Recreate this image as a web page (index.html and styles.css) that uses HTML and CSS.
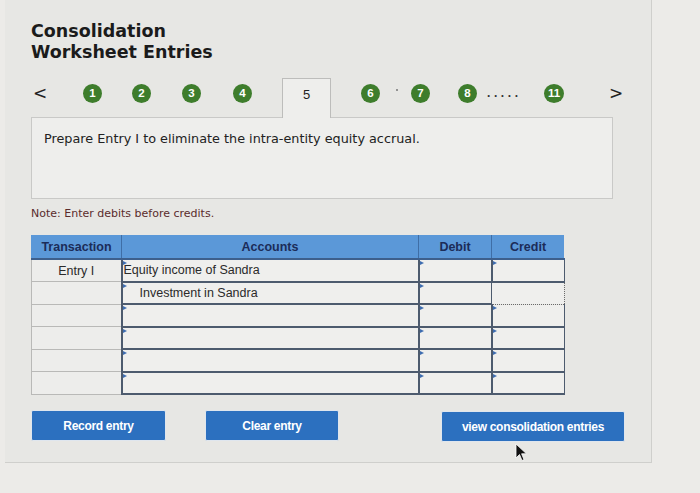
FILE: index.html
```html
<!DOCTYPE html>
<html>
<head>
<meta charset="utf-8">
<link rel="stylesheet" href="styles.css">
</head>
<body>
<div class="panel">
  <h1 class="title">Consolidation<br>Worksheet Entries</h1>
  <div class="nav">
    <span class="arrow prev">&lt;</span>
    <span class="dot n1">1</span>
    <span class="dot n2">2</span>
    <span class="dot n3">3</span>
    <span class="dot n4">4</span>
    <span class="tab">5</span>
    <span class="dot n6">6</span>
    <span class="speck"></span>
    <span class="dot n7">7</span>
    <span class="dot n8">8</span>
    <span class="ellipsis">.....</span>
    <span class="dot n11">11</span>
    <span class="arrow next">&gt;</span>
  </div>
  <div class="prompt">Prepare Entry I to eliminate the intra-entity equity accrual.</div>
  <div class="note">Note: Enter debits before credits.</div>
  <table class="entries">
    <thead>
      <tr>
        <th class="c-tr">Transaction</th>
        <th class="c-acc">Accounts</th>
        <th class="c-num">Debit</th>
        <th class="c-num">Credit</th>
      </tr>
    </thead>
    <tbody>
      <tr>
        <td class="tr">Entry I</td>
        <td class="in acc">Equity income of Sandra</td>
        <td class="in"></td>
        <td class="in"></td>
      </tr>
      <tr>
        <td class="tr"></td>
        <td class="in acc indent">Investment in Sandra</td>
        <td class="in"></td>
        <td class="in focus"></td>
      </tr>
      <tr><td class="tr"></td><td class="in"></td><td class="in"></td><td class="in"></td></tr>
      <tr><td class="tr"></td><td class="in"></td><td class="in"></td><td class="in"></td></tr>
      <tr><td class="tr"></td><td class="in"></td><td class="in"></td><td class="in"></td></tr>
      <tr><td class="tr"></td><td class="in"></td><td class="in"></td><td class="in"></td></tr>
    </tbody>
  </table>
  <div class="buttons">
    <button class="btn b-record">Record entry</button>
    <button class="btn b-clear">Clear entry</button>
    <button class="btn b-view">view consolidation entries</button>
  </div>
  <svg class="cursor" width="13" height="19" viewBox="0 0 13 19">
    <path d="M1 1 L1 15 L4.5 11.5 L7 17.5 L9 16.6 L6.6 10.8 L11.5 10.8 Z" fill="#111" stroke="#fff" stroke-width="0.8"/>
  </svg>
</div>
</body>
</html>
```
FILE: styles.css
```css
html, body {
  margin: 0;
  padding: 0;
}
body {
  width: 700px;
  height: 493px;
  background: #ecebe8;
  font-family: "Liberation Sans", Arial, sans-serif;
  overflow: hidden;
}
.panel {
  position: relative;
  margin-left: 5px;
  width: 647px;
  height: 463px;
  background: #e7e7e4;
  border-right: 1px solid #cfcfcc;
  border-bottom: 1px solid #cfcfcc;
  padding-left: 26px;
  box-sizing: border-box;
  padding-top: 21px;
}
.title {
  margin: 0;
  font-family: "DejaVu Sans", Verdana, sans-serif;
  font-weight: bold;
  font-size: 17.5px;
  line-height: 21px;
  color: #1b1b1b;
}
.nav {
  display: flex;
  align-items: flex-start;
  margin-top: 15px;
  height: 39px;
}
.arrow {
  width: 18px;
  text-align: center;
  font-family: "DejaVu Sans", sans-serif;
  font-size: 17px;
  line-height: 18px;
  margin-top: 6px;
  color: #222;
}
.dot {
  width: 19px;
  height: 19px;
  border-radius: 50%;
  background: #3e7d2c;
  color: #fff;
  font-weight: bold;
  font-size: 11.5px;
  line-height: 19px;
  text-align: center;
  margin-top: 6px;
}
.n1 { margin-left: 34px; }
.n2 { margin-left: 30px; }
.n3 { margin-left: 31px; }
.n4 { margin-left: 32px; }
.tab {
  margin-left: 30px;
  width: 49px;
  height: 40px;
  box-sizing: border-box;
  border: 1px solid #bdbdbb;
  border-bottom: none;
  background: #eeeeec;
  text-align: center;
  font-size: 13px;
  line-height: 18px;
  padding-top: 7px;
  color: #222;
  position: relative;
  z-index: 2;
}
.n6 { margin-left: 30px; }
.speck {
  width: 2px;
  height: 2px;
  border-radius: 50%;
  background: #777;
  margin-left: 16px;
  margin-top: 11px;
}
.n7 { margin-left: 13px; }
.n8 { margin-left: 28px; }
.ellipsis {
  margin-left: 10px;
  width: 34px;
  font-weight: bold;
  font-size: 12px;
  letter-spacing: 3.6px;
  line-height: 18px;
  margin-top: 6px;
  color: #333;
  white-space: nowrap;
  overflow: hidden;
}
.n11 {
  margin-left: 23px;
  width: 20px;
}
.next { margin-left: 43px; }
.prompt {
  width: 582px;
  height: 82px;
  box-sizing: border-box;
  border: 1px solid #c9c9c7;
  background: #eeeeec;
  padding: 12px 0 0 12px;
  font-family: "DejaVu Sans", Verdana, sans-serif;
  font-size: 12.8px;
  line-height: 18px;
  color: #222;
  position: relative;
  z-index: 1;
}
.note {
  margin-top: 8px;
  font-family: "DejaVu Sans", Verdana, sans-serif;
  font-size: 11px;
  line-height: 14px;
  color: #5a2c2c;
}
.entries {
  margin-top: 14px;
  width: 531px;
  border-collapse: collapse;
  table-layout: fixed;
}
.entries th {
  height: 23px;
  padding: 0;
  background: #5b98d8;
  color: #1c2c58;
  font-size: 12.5px;
  font-weight: bold;
  border-left: 1px solid #3f6ea6;
  border-bottom: 2px solid #3d5f8c;
}
.entries th:first-child { border-left: 1px solid #5b98d8; }
.c-tr { width: 89px; }
.c-acc { width: 296px; }
.c-num { width: 72px; }
.entries td {
  height: 20.5px;
  padding: 0;
  font-size: 12.5px;
  color: #2a2a2a;
}
.tr {
  text-align: center;
  background: #ededeb;
  border: 1px solid #b9b9b7;
}
.in {
  position: relative;
  background: #efefed;
  border-left: 2px solid #4d5b6e;
  border-bottom: 2px solid #4d5b6e;
  border-right: 1px solid #4d5b6e;
}
.in::before {
  content: "";
  position: absolute;
  left: 0;
  top: 1px;
  border-top: 2.5px solid transparent;
  border-bottom: 2.5px solid transparent;
  border-left: 4px solid #3e6db0;
}
.acc { padding-left: 1px !important; }
.indent { padding-left: 17px !important; }
.focus {
  border: 1px dotted #6a6a6a;
}
.focus::before { display: none; }
.buttons {
  display: flex;
  margin-top: 15px;
  align-items: flex-start;
}
.btn {
  height: 31px;
  border: 1px solid #dfe6ee;
  border-radius: 2px;
  background: #2c70bf;
  color: #fff;
  font-family: "Liberation Sans", Arial, sans-serif;
  font-weight: bold;
  font-size: 12px;
  letter-spacing: -0.3px;
  padding: 0;
}
.b-record { width: 135px; }
.b-clear { width: 134px; margin-left: 39px; }
.b-view { width: 184px; margin-left: 102px; margin-top: 1px; }
.cursor {
  position: absolute;
  left: 510px;
  top: 443px;
}
```
